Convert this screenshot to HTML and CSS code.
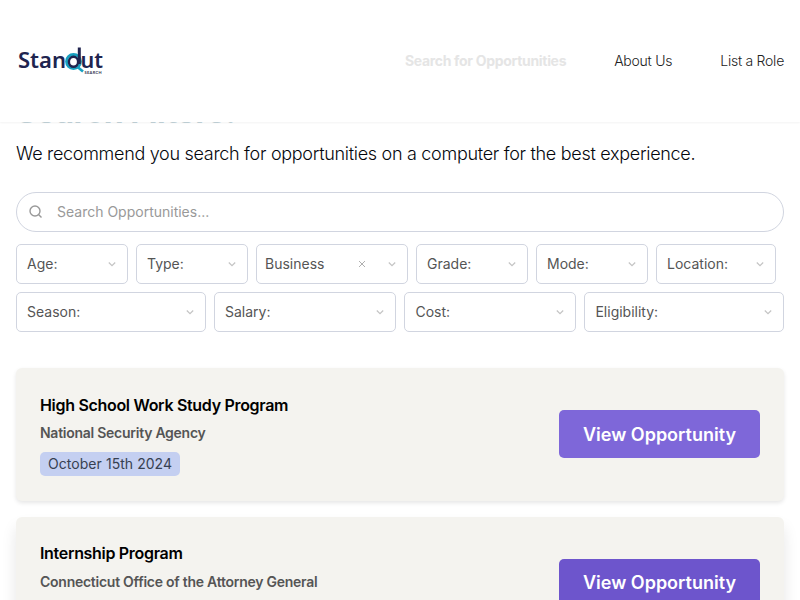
FILE: index.html
```html
<!DOCTYPE html>
<html lang="en">
<head>
<meta charset="utf-8">
<title>Standout Search</title>
<link rel="stylesheet" href="styles.css">
</head>
<body>
<svg class="symbols" aria-hidden="true">
  <symbol id="chevron" viewBox="0 0 8 8"><path d="M.8 2.5 4 5.7 7.2 2.5" fill="none" stroke="currentColor" stroke-width="1.2"/></symbol>
</svg>
<header class="header">
  <svg class="logo" width="90" height="34" viewBox="0 0 90 34" role="img" aria-label="Standout Search">
    <text class="logo-word" x="2" y="23" textLength="48" lengthAdjust="spacingAndGlyphs">Stan</text>
    <circle cx="57.5" cy="16.5" r="7" fill="none" stroke="#18a0c0" stroke-width="2.8"/>
    <path d="M61.5 22 67 26.5" stroke="#18a0c0" stroke-width="2.6"/>
    <ellipse cx="57.5" cy="16.8" rx="4.6" ry="5" fill="none" stroke="#20244f" stroke-width="2.4"/>
    <path d="M63.3 2.5V19" stroke="#20244f" stroke-width="3"/>
    <text class="logo-word" x="64.5" y="23" textLength="22.5" lengthAdjust="spacingAndGlyphs">ut</text>
    <text class="logo-sub" x="68.5" y="28.5" textLength="17">SEARCH</text>
  </svg>
  <nav class="nav">
    <a class="nav-link nav-active">Search for Opportunities</a>
    <a class="nav-link">About Us</a>
    <a class="nav-link">List a Role</a>
  </nav>
</header>
<main class="main">
  <h1 class="heading">Search Filters:</h1>
  <p class="intro">We recommend you search for opportunities on a computer for the best experience.</p>
  <div class="search">
    <svg width="14" height="14" viewBox="0 0 14 14" fill="none" stroke="#999" stroke-width="1.4"><circle cx="6" cy="6" r="5"/><path d="m9.5 9.5 3 3"/></svg>
    <span>Search Opportunities...</span>
  </div>
  <div class="filters filters-top">
    <div class="filter"><span>Age:</span><svg><use href="#chevron"/></svg></div>
    <div class="filter"><span>Type:</span><svg><use href="#chevron"/></svg></div>
    <div class="filter filter-selected"><span>Business</span><svg class="clear" viewBox="0 0 8 8"><path d="m1 1 6 6M7 1 1 7" stroke="currentColor"/></svg><svg><use href="#chevron"/></svg></div>
    <div class="filter"><span>Grade:</span><svg><use href="#chevron"/></svg></div>
    <div class="filter"><span>Mode:</span><svg><use href="#chevron"/></svg></div>
    <div class="filter"><span>Location:</span><svg><use href="#chevron"/></svg></div>
  </div>
  <div class="filters filters-bottom">
    <div class="filter"><span>Season:</span><svg><use href="#chevron"/></svg></div>
    <div class="filter"><span>Salary:</span><svg><use href="#chevron"/></svg></div>
    <div class="filter"><span>Cost:</span><svg><use href="#chevron"/></svg></div>
    <div class="filter"><span>Eligibility:</span><svg><use href="#chevron"/></svg></div>
  </div>
  <section class="results">
    <article class="card">
      <div class="details">
        <h2 class="title">High School Work Study Program</h2>
        <p class="org">National Security Agency</p>
        <span class="date">October 15th 2024</span>
      </div>
      <a class="button button-hover">View Opportunity</a>
    </article>
    <article class="card card-raised">
      <div class="details">
        <h2 class="title">Internship Program</h2>
        <p class="org">Connecticut Office of the Attorney General</p>
      </div>
      <a class="button">View Opportunity</a>
    </article>
  </section>
</main>
</body>
</html>
```
FILE: styles.css
```css
* { box-sizing: border-box; }
body { margin: 0; height: 600px; overflow: hidden; background: #fff; color: #111827; font-family: Inter, sans-serif; }
.symbols { display: none; }
h1, h2, p { margin: 0; }
.header { position: relative; z-index: 1; height: 122px; padding: 0 16px; display: flex; align-items: center; justify-content: space-between; background: #fff; box-shadow: 0 1px 2px rgba(0,0,0,.05); }
.logo { display: block; margin-top: 2px; }
.logo-word { font: 600 21px "Noto Sans", sans-serif; fill: #20244f; }
.logo-sub { font: 700 4px Lato, sans-serif; fill: #30344f; }
.nav { display: flex; gap: 48px; }
.nav-link { font-size: 14px; line-height: 20px; color: #222; font-weight: 300; letter-spacing: -.25px; white-space: nowrap; }
.nav-active { color: #e5e5e5; font-weight: 700; letter-spacing: -.31px; }
.main { padding: 0 16px; }
.heading { height: 36px; margin-top: -25px; margin-bottom: 7px; font-size: 32px; line-height: 29px; font-weight: 700; letter-spacing: -.45px; color: #c3d3d9; }
.intro { font-size: 18px; line-height: 28px; font-weight: 300; letter-spacing: -.3px; color: #05070d; white-space: nowrap; }
.search { margin-top: 24px; height: 40px; border: 1px solid #d1d5e0; border-radius: 20px; padding: 0 12px 1px; display: flex; align-items: center; gap: 14px; font-size: 14px; color: #999; }
.filters { display: grid; gap: 8px; }
.filters-top { margin-top: 12px; grid-template-columns: 112px 112px 152px 112px 112px 120px; }
.filters-bottom { margin-top: 8px; grid-template-columns: 190px 182.45px 172px 199.55px; }
.filter { height: 40px; border: 1px solid #d1d5e0; border-radius: 5px; padding: 0 11px 0 10px; display: flex; align-items: center; font-size: 14px; color: #555; }
.filter span { padding-bottom: 1px; }
.filter-selected { padding-left: 8px; }
.filter svg { width: 8px; height: 8px; margin-left: auto; color: #c4c4c4; }
.filter svg.clear { color: #b0b0b0; }
.filter svg.clear + svg { margin-left: 22px; }
.results { margin-top: 36px; display: grid; gap: 16px; }
.card { height: 132.5px; padding: 24px; border-radius: 6px; background: #f4f3ef; display: flex; align-items: center; justify-content: space-between; box-shadow: 0 2px 4px rgba(0,0,0,.1); }
.card-raised { box-shadow: 0 10px 15px rgba(0,0,0,.1); }
.details { align-self: flex-start; padding-top: 1px; }
.title { font-size: 16px; line-height: 24px; font-weight: 600; color: #000; letter-spacing: -.31px; }
.org { margin-top: 6px; font-size: 14px; line-height: 20px; font-weight: 600; color: #555; letter-spacing: -.26px; }
.date { display: block; width: max-content; margin-top: 9px; padding: 0 8px; border-radius: 5px; background: #c4cff1; font-size: 14px; line-height: 24px; letter-spacing: .05px; color: #374151; }
.button { width: 201px; height: 48px; border-radius: 5px; background: #6d55cc; color: #fff; font-size: 18px; font-weight: 600; line-height: 49px; text-align: center; }
.card-raised .title { line-height: 23px; }
.card-raised .org { margin-top: 7px; }
.card-raised .button { line-height: 47px; }
.button-hover { background: #7e67d9; }
```
